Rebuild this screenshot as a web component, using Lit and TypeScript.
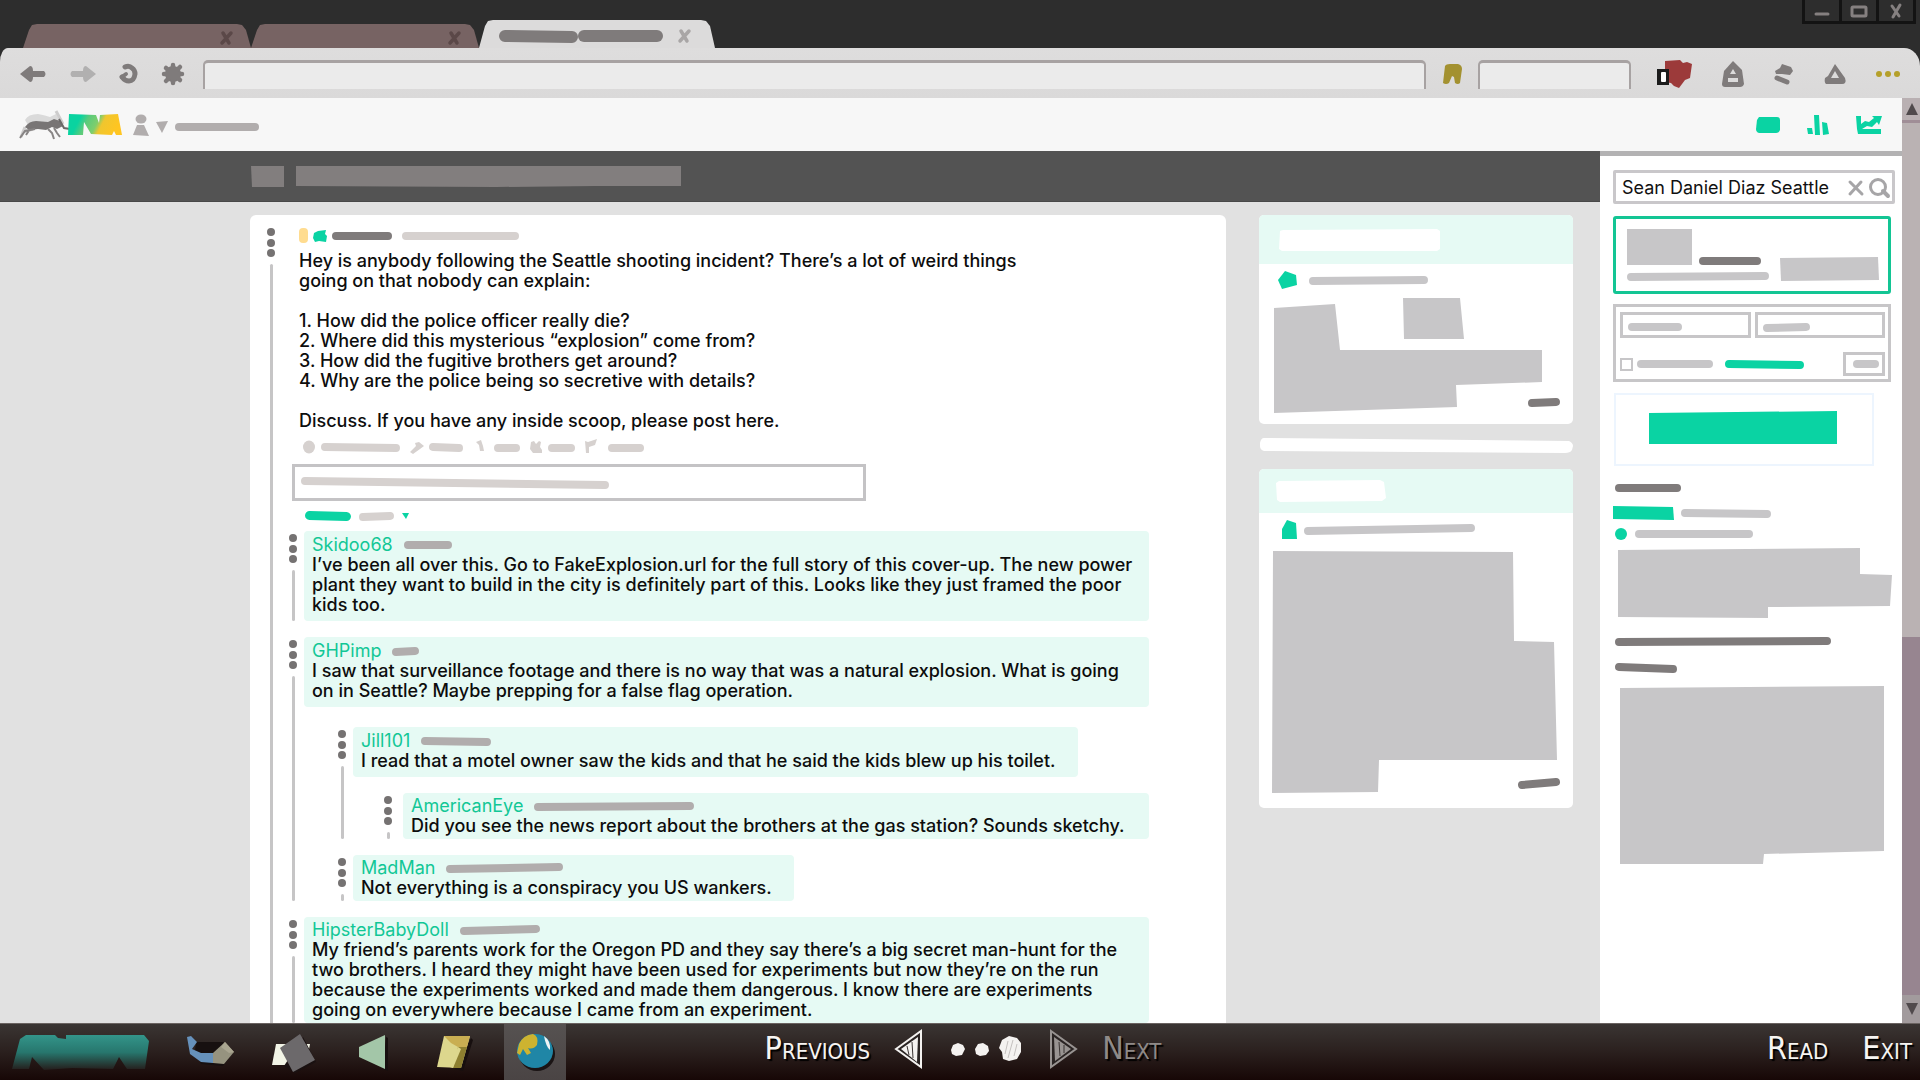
import { LitElement, html, css, svg, nothing, type SVGTemplateResult, type TemplateResult } from "lit";
import { customElement } from "lit/decorators.js";

/* ---------- drawing helpers ---------- */

const INK = "#7f7b7b";
const MUTED = "#b1adad";
const STONE = "#d6d1cf";
const GREY = "#c7c6c8";
const GREEN = "#0ad3a3";

/** Decorative inline drawing of a given size. */
const art = (w: number, h: number, body: SVGTemplateResult) =>
  html`<svg class="art" width=${w} height=${h} viewBox="0 0 ${w} ${h}" aria-hidden="true">${body}</svg>`;

/** Hand-drawn marker stroke standing in for a run of text. */
const stroke = (w: number, color: string, drop = 0, t = 8) => {
  const h = t + Math.abs(drop);
  const r = t / 2;
  const y1 = drop < 0 ? h - r : r;
  const y2 = drop < 0 ? r : h - r;
  return art(
    w,
    h,
    svg`<line x1=${r} y1=${y1} x2=${w - r} y2=${y2} stroke=${color} stroke-width=${t} stroke-linecap="round"/>`,
  );
};

const shape = (w: number, h: number, points: string, color: string) =>
  art(w, h, svg`<polygon points=${points} fill=${color}/>`);

const dots = () =>
  art(
    10,
    30,
    svg`<g fill="#757272"><circle cx="5" cy="4" r="4"/><circle cx="5" cy="15" r="4"/><circle cx="5" cy="25" r="4"/></g>`,
  );

/* ---------- icons ---------- */

const backIcon = art(28, 18, svg`<path d="M1 9 L11 1 Q14 1 14 6 L25 6 Q28 9 25 12 L14 12 Q14 17 11 17 Z" fill=${INK}/>`);
const forwardIcon = art(28, 18, svg`<path d="M27 9 L17 1 Q14 1 14 6 L3 6 Q0 9 3 12 L14 12 Q14 17 17 17 Z" fill="#b1b0b0"/>`);
const reloadIcon = art(
  20,
  22,
  svg`<path d="M6 4 Q10 2 13 5 Q16 7 16 11 Q15 18 10 18 Q6 18 3 14" fill="none" stroke=${INK} stroke-width="5" stroke-linecap="round" stroke-linejoin="round"/><path d="M3 14 L7 11" stroke=${INK} stroke-width="4" stroke-linecap="round"/>`,
);
const burstIcon = art(
  24,
  22,
  svg`<circle cx="12" cy="11" r="8" fill=${INK}/><path d="M12 2V20M3 11H21M5 5L19 17M19 4L5 18" stroke=${INK} stroke-width="4.500" stroke-linecap="round"/>`,
);
const closeIcon = (color: string) =>
  art(14, 14, svg`<path d="M4 2 L10 12 M12 2 L3 12" fill="none" stroke=${color} stroke-width="3.500" stroke-linecap="round"/>`);
const bookmarkIcon = art(
  20,
  22,
  svg`<path d="M3 3 Q4 1 8 1 L16 1 Q20 2 20 6 L18 20 Q16 22 13 20 L12 14 L10 13 L7 20 Q4 22 1 20 Z" fill="#a39130"/>`,
);
const shieldIcon = art(
  35,
  28,
  svg`<path d="M8 1 L23 0 L26 3 L30 2 L35 4 L33 18 L28 20 L22 28 L17 26 L14 23 L8 22 Z" fill="#9c3a3a"/><rect x="0" y="9" width="12" height="16" fill="#1c1c1c"/><rect x="4" y="12" width="5" height="10" rx="1" fill="#fff"/>`,
);
const lanternIcon = art(
  22,
  26,
  svg`<path d="M11 0 L20 9 L22 23 Q21 26 18 26 L3 26 Q0 26 0 23 L2 10 Z" fill=${INK}/><path d="M11 8 L14 13 L8 13 Z" fill="#dcdbdb"/><rect x="6" y="17" width="10" height="4" fill="#dcdbdb"/>`,
);
const lumpIcon = art(
  20,
  22,
  svg`<path d="M1 8 L6 5 L8 1 L17 4 L19 8 L16 12 L8 11 L2 11 Z" fill=${INK}/><path d="M3 15 L13 19" stroke=${INK} stroke-width="5" stroke-linecap="round"/>`,
);
const wedgeIcon = art(
  22,
  20,
  svg`<path d="M11 0 L21 14 Q23 20 18 20 L2 20 Q0 18 1 14 L4 12 Z" fill=${INK}/><path d="M11 7 L15 14 L7 14 Z" fill="#dcdbdb"/>`,
);
const moreIcon = art(24, 6, svg`<g fill="#b5a02a"><circle cx="3" cy="3" r="3"/><circle cx="12" cy="3" r="3"/><circle cx="21" cy="3" r="3"/></g>`);

const logo = art(
  104,
  32,
  svg`<path d="M7 11 Q10 5 20 5 Q26 6 32 8 L38 5 L42 12 L34 16 L10 16 Z" fill="#dadada"/>
    <path d="M38 2 L45 15 M7 18 L3 28 M15 20 L5 23" stroke="#cdcccc" stroke-width="3"/>
    <path d="M7 18 Q11 12 18 12 L30 13 L36 10 L42 12 L45 17 L39 20 L34 18 L28 21 L20 20 L11 21 Z" fill="#787575"/>
    <path d="M12 20 L8 26 M17 20 L7 22 L2 29 M30 20 L34 24 L36 30 M36 19 L39 24 L42 28" fill="none" stroke="#878484" stroke-width="2"/>
    <path d="M41 10 L46 19 L52 20" fill="none" stroke="#6b6868" stroke-width="2"/>
    <defs><linearGradient id="brand" x1="0" x2="1" y1="0" y2="0.200"><stop offset="0.250" stop-color="#0ad3a0"/><stop offset="0.400" stop-color="#5acb7c"/><stop offset="0.600" stop-color="#7fce6c"/><stop offset="0.700" stop-color="#efc62f"/><stop offset="1" stop-color="#ffc521"/></linearGradient></defs>
    <path d="M51 5 L78 6 L81 14 L82 6 L100 5 L104 26 L98 26 L96 22 L94 26 L73 25 L66 13 L65 26 L50 26 Z" fill="url(#brand)"/>`,
);
const personIcon = art(
  16,
  22,
  svg`<ellipse cx="8" cy="5" rx="5.500" ry="4.500" fill=${MUTED}/><path d="M4 11 L11 11 L16 22 L0 21 Z" fill=${MUTED}/>`,
);
const caretIcon = art(12, 12, svg`<path d="M0 1 L12 0 L6 12 Z" fill=${MUTED}/>`);
const mailIcon = art(24, 18, svg`<path d="M3 1 L21 1 Q24 1 24 4 L24 14 Q23 17 20 17 L3 17 Q0 16 0 13 L1 4 Z" fill=${GREEN}/>`);
const barsIcon = art(
  22,
  20,
  svg`<path d="M0 13 L5 13 L6 19 L1 19 Z M7 0 L12 0 L13 20 L8 20 Z M15 7 L20 8 L22 19 L16 20 Z" fill=${GREEN}/>`,
);
const trendIcon = art(
  26,
  20,
  svg`<path d="M0 1 L5 1 L5 9 L9 6 L13 7 L18 3 L16 1 L26 1 L23 10 L21 7 L16 12 L11 11 L6 14 L25 14 L25 19 L2 19 L1 14 Z" fill=${GREEN}/>`,
);
const clearIcon = art(16, 16, svg`<path d="M2 2 L14 14 M13 2 L2 14" stroke="#a6a5a7" stroke-width="3" stroke-linecap="round"/>`);
const searchIcon = art(
  22,
  20,
  svg`<circle cx="10" cy="9" r="7.500" fill="none" stroke="#a6a5a7" stroke-width="3"/><path d="M15 13 L20 18" stroke="#a6a5a7" stroke-width="4" stroke-linecap="round"/>`,
);

/* ---------- thread data ---------- */

interface Comment {
  name: string;
  stamp: [number, number];
  text: string[];
  tight?: boolean;
  wide?: boolean;
  replies?: Comment[];
}

const thread: Comment[] = [
  {
    name: "Skidoo68",
    stamp: [48, 0],
    wide: true,
    text: [
      "I’ve been all over this. Go to FakeExplosion.url for the full story of this cover-up. The new power",
      "plant they want to build in the city is definitely part of this. Looks like they just framed the poor",
      "kids too.",
    ],
  },
  {
    name: "GHPimp",
    stamp: [27, -1],
    wide: true,
    text: [
      "I saw that surveillance footage and there is no way that was a natural explosion. What is going",
      "on in Seattle? Maybe prepping for a false flag operation.",
    ],
    replies: [
      {
        name: "Jill101",
        stamp: [70, 1],
        text: ["I read that a motel owner saw the kids and that he said the kids blew up his toilet."],
        replies: [
          {
            name: "AmericanEye",
            stamp: [160, -1],
            tight: true,
            wide: true,
            text: ["Did you see the news report about the brothers at the gas station? Sounds sketchy."],
          },
        ],
      },
      {
        name: "MadMan",
        stamp: [117, -2],
        tight: true,
        text: ["Not everything is a conspiracy you US wankers."],
      },
    ],
  },
  {
    name: "HipsterBabyDoll",
    stamp: [80, -2],
    wide: true,
    tight: true,
    text: [
      "My friend’s parents work for the Oregon PD and they say there’s a big secret man-hunt for the",
      "two brothers. I heard they might have been used for experiments but now they’re on the run",
      "because the experiments worked and made them dangerous. I know there are experiments",
      "going on everywhere because I came from an experiment.",
    ],
  },
];

const lines = (text: string[]) => text.map((line, i) => html`${i ? html`<br />` : nothing}${line}`);

/* ---------- shared styles ---------- */

const base = css`
  * {
    box-sizing: border-box;
  }
  .art {
    display: block;
    flex: none;
    overflow: visible;
  }
  button {
    display: flex;
    align-items: center;
    justify-content: center;
    flex: none;
    margin: 0;
    padding: 0;
    border: 0;
    background: none;
    color: inherit;
    font: inherit;
    cursor: pointer;
  }
  input {
    margin: 0;
    padding: 0;
    border: 0;
    outline: 0;
    border-radius: 0;
    background: none;
    font: inherit;
    color: inherit;
    min-width: 0;
  }
  a {
    color: inherit;
    text-decoration: none;
  }
`;

/* ---------- browser chrome ---------- */

@customElement("browser-chrome")
export class BrowserChrome extends LitElement {
  static styles = [
    base,
    css`
      :host {
        display: block;
        background: #2d2d2d;
      }
      .titlebar {
        display: flex;
        justify-content: space-between;
        height: 48px;
        padding: 0 4px 0 23px;
      }
      .tabs {
        display: flex;
        align-items: flex-end;
      }
      .tab {
        display: flex;
        align-items: center;
        justify-content: flex-end;
        width: 228px;
        height: 24px;
        padding: 4px 18px 0;
        background: #776363;
        clip-path: polygon(0 100%, 6px 6px, 9px 1px, 14px 0, calc(100% - 14px) 0, calc(100% - 9px) 1px, calc(100% - 5px) 6px, 100% 100%);
      }
      .tab.active {
        width: 236px;
        height: 28px;
        padding: 4px 24px 0 19px;
        gap: 14px;
        background: #dcdbdb;
      }
      .title {
        display: flex;
      }
      .window {
        display: flex;
        align-self: flex-start;
        height: 24px;
        background: #131313;
        padding: 0 3px 3px;
        gap: 3px;
      }
      .window button {
        width: 34px;
        height: 21px;
        background: #2d2d2d;
      }
      .toolbar {
        display: flex;
        align-items: center;
        gap: 16px;
        height: 50px;
        padding: 2px 20px 0 19px;
        background: linear-gradient(#dedddd, #dad9d9);
        border-radius: 8px 16px 0 0 / 14px 18px 0 0;
      }
      .nav {
        display: flex;
        align-items: center;
        gap: 22px;
        padding-right: 2px;
      }
      .field {
        height: 29px;
        border: solid #a7a2a2;
        border-width: 3px 2px 0;
        border-radius: 5px 5px 0 0;
        background: #ebebeb;
        padding: 0 8px;
      }
      .url {
        flex: 1;
      }
      .find {
        width: 153px;
      }
      .tools {
        display: flex;
        align-items: center;
        gap: 30px;
        padding-left: 10px;
      }
    `,
  ];

  render() {
    return html`
      <div class="titlebar">
        <div class="tabs">
          <button class="tab" aria-label="Close tab 1">${closeIcon("#5b4848")}</button>
          <button class="tab" aria-label="Close tab 2">${closeIcon("#5b4848")}</button>
          <button class="tab active" aria-label="Current tab">
            <span class="title">${stroke(79, INK, 1, 12)}${stroke(85, INK, 0, 12)}</span>
            ${closeIcon("#a9a6a6")}
          </button>
        </div>
        <div class="window">
          <button aria-label="Minimize">
            ${art(16, 14, svg`<path d="M2 10 H14" stroke="#858080" stroke-width="3" stroke-linecap="round"/>`)}
          </button>
          <button aria-label="Maximize">
            ${art(18, 14, svg`<rect x="2" y="3" width="14" height="9" rx="1" fill="none" stroke="#858080" stroke-width="3"/>`)}
          </button>
          <button aria-label="Close window">
            ${art(14, 14, svg`<path d="M3 2 L10 12 M11 1 L4 13" stroke="#858080" stroke-width="3" stroke-linecap="round"/>`)}
          </button>
        </div>
      </div>
      <div class="toolbar">
        <div class="nav">
          <button aria-label="Back">${backIcon}</button>
          <button aria-label="Forward">${forwardIcon}</button>
          <button aria-label="Reload">${reloadIcon}</button>
          <button aria-label="Settings">${burstIcon}</button>
        </div>
        <input class="field url" type="text" aria-label="Address" />
        <button aria-label="Bookmark">${bookmarkIcon}</button>
        <input class="field find" type="text" aria-label="Web search" />
        <div class="tools">
          <button aria-label="Shield">${shieldIcon}</button>
          <button aria-label="Home">${lanternIcon}</button>
          <button aria-label="Sync">${lumpIcon}</button>
          <button aria-label="Alerts">${wedgeIcon}</button>
          <button aria-label="More">${moreIcon}</button>
        </div>
      </div>
    `;
  }
}

/* ---------- forum thread ---------- */

@customElement("forum-thread")
export class ForumThread extends LitElement {
  static styles = [
    base,
    css`
      :host {
        display: flex;
        gap: 23px;
        min-width: 0;
        padding: 13px 77px 0 16px;
        border-radius: 6px 6px 0 0;
        background: #fff;
        font-weight: 500;
        font-size: 18px;
        line-height: 20px;
        color: #0d0d0d;
      }
      .rail {
        display: flex;
        flex: none;
        flex-direction: column;
        align-items: center;
        gap: 6px;
        width: 10px;
      }
      .rail::after {
        content: "";
        flex: 1;
        width: 3px;
        border-radius: 2px;
        background: #c6c5c6;
      }
      .content {
        flex: 1;
        min-width: 0;
        margin-left: -10px;
      }
      .post {
        padding-left: 10px;
      }
      .byline {
        display: flex;
        align-items: center;
        height: 16px;
        gap: 5px;
      }
      .byline .art:last-child {
        margin-left: 5px;
      }
      .text {
        margin: 7px 0 0;
      }
      .text p {
        margin: 0 0 20px;
      }
      .text p:last-child {
        margin: 0;
      }
      .actions {
        display: flex;
        align-items: center;
        gap: 10px;
        height: 33px;
        padding-left: 4px;
      }
      .actions a {
        display: flex;
        align-items: center;
        gap: 5px;
      }
      .reply {
        display: grid;
        align-items: center;
        width: 574px;
        max-width: 100%;
        height: 37px;
        margin-left: 3px;
        border: 3px solid #c4c3c5;
      }
      .reply > * {
        grid-area: 1 / 1;
      }
      .reply .art {
        margin-left: 6px;
      }
      .reply input {
        width: 100%;
        height: 100%;
      }
      .sort {
        display: flex;
        align-items: center;
        gap: 8px;
        height: 30px;
        padding-left: 16px;
      }
      .comment {
        display: flex;
        gap: 6px;
        margin-bottom: 16px;
      }
      .thread {
        margin-left: -1px;
      }
      .thread .rail {
        padding-top: 3px;
      }
      .body {
        flex: 1;
        min-width: 0;
        max-width: 845px;
      }
      .bubble {
        width: fit-content;
        min-width: 0;
        max-width: 100%;
        padding: 4px 22px 6px 8px;
        border-radius: 4px;
        background: #e6faf4;
      }
      .wide {
        width: 100%;
        padding-right: 8px;
      }
      .tight {
        padding-bottom: 3px;
        padding-top: 3px;
      }
      .name {
        display: flex;
        align-items: center;
        gap: 11px;
      }
      .name a {
        color: #12c796;
        font-weight: 400;
      }
      .bubble p {
        margin: 0;
      }
      .replies {
        margin: 20px 0 0 33px;
      }
      .replies .replies {
        margin-left: 30px;
        margin-top: 16px;
      }
      .replies .replies .comment {
        gap: 10px;
      }
      .replies .comment:last-child {
        margin-bottom: 0;
      }
    `,
  ];

  private comment(c: Comment): TemplateResult {
    const [w, drop] = c.stamp;
    return html`
      <article class="comment">
        <div class="rail">${dots()}</div>
        <div class="body">
          <div class="bubble ${c.tight ? "tight" : ""} ${c.wide ? "wide" : ""}">
            <div class="name"><a href="#${c.name}">${c.name}</a>${stroke(w, MUTED, drop)}</div>
            <p>${lines(c.text)}</p>
          </div>
          ${c.replies ? html`<div class="replies">${c.replies.map((r) => this.comment(r))}</div>` : nothing}
        </div>
      </article>
    `;
  }

  render() {
    return html`
      <div class="rail">${dots()}</div>
      <div class="content">
        <div class="post">
          <div class="byline">
            ${art(9, 16, svg`<rect x="0" y="0" width="9" height="15" rx="4" fill="#ffdc90"/>`)}
            ${shape(14, 12, "1,3 5,1 13,0 12,4 14,6 13,12 6,11 2,12 0,8", GREEN)} ${stroke(60, INK)}
            ${stroke(117, STONE)}
          </div>
          <div class="text">
            <p>
              Hey is anybody following the Seattle shooting incident? There’s a lot of weird things<br />going on that
              nobody can explain:
            </p>
            <p>
              1. How did the police officer really die?<br />2. Where did this mysterious “explosion” come from?<br />3.
              How did the fugitive brothers get around?<br />4. Why are the police being so secretive with details?
            </p>
            <p>Discuss. If you have any inside scoop, please post here.</p>
          </div>
          <div class="actions">
            <a href="#comments" aria-label="Comments"
              >${art(13, 13, svg`<ellipse cx="6" cy="6" rx="6" ry="6.500" fill=${STONE}/>`)}${stroke(79, STONE, 1)}</a
            >
            <a href="#share" aria-label="Share">${shape(14, 12, "0,10 6,4 5,1 9,0 14,4 10,7 3,12", STONE)}${stroke(34, STONE, 1)}</a>
            <a href="#save" aria-label="Save">${shape(16, 13, "3,1 8,-1 10,5 11,10 7,10 6,4", STONE)}${stroke(26, STONE)}</a>
            <a href="#hide" aria-label="Hide">${shape(13, 12, "1,0 4,-1 6,2 9,-1 11,0 10,5 12,8 12,11 3,11 0,7", STONE)}${stroke(27, STONE)}</a>
            <a href="#report" aria-label="Report"
              >${shape(18, 14, "0,0 3,1 12,-2 10,4 4,6 4,12 1,12", STONE)}${stroke(36, STONE)}</a
            >
          </div>
        </div>
        <div class="reply">
          ${stroke(308, STONE, 4)}
          <input type="text" aria-label="Write a comment" />
        </div>
        <div class="sort">
          ${stroke(46, GREEN, 1, 9)} ${stroke(35, STONE, -1)} ${art(7, 6, svg`<path d="M0 0H7L4 6Z" fill=${GREEN}/>`)}
        </div>
        <div class="thread">${thread.map((c) => this.comment(c))}</div>
      </div>
    `;
  }
}

/* ---------- right-hand cards ---------- */

@customElement("related-cards")
export class RelatedCards extends LitElement {
  static styles = [
    base,
    css`
      :host {
        display: flex;
        flex-direction: column;
        gap: 14px;
      }
      .card {
        overflow: hidden;
        border-radius: 5px;
        background: #fff;
      }
      .head {
        display: flex;
        align-items: center;
        height: 49px;
        padding-left: 20px;
        background: #e6faf4;
      }
      .second .head {
        height: 44px;
        padding-left: 17px;
      }
      .row {
        display: flex;
        align-items: center;
        gap: 12px;
        padding: 7px 19px 6px;
      }
      .second .row {
        gap: 4px;
      }
      .picture {
        padding: 0 13px;
      }
      .more {
        display: flex;
        justify-content: flex-end;
        padding: 0 13px 17px;
      }
      .first .more {
        margin-top: -14px;
      }
      .second .more {
        margin-top: -17px;
        padding-bottom: 19px;
      }
    `,
  ];

  render() {
    return html`
      <section class="card first">
        <div class="head">${shape(161, 22, "1,2 4,1 158,0 161,2 161,20 158,22 3,22 0,20", "#fff")}</div>
        <div class="row">${shape(19, 19, "0,9 7,0 18,4 19,14 4,18", GREEN)}${stroke(119, GREY, -1)}</div>
        <div class="picture">
          ${art(
            270,
            116,
            svg`<path d="M2 12 L63 8 L68 54 L270 54 L270 86 L184 89 L185 111 L2 117 Z M131 2 L188 2 L192 43 L132 43 Z" fill=${GREY}/>`,
          )}
        </div>
        <div class="more"><a href="#more-a" aria-label="More">${stroke(32, INK, -1)}</a></div>
      </section>
      ${art(314, 17, svg`<path d="M5 0 L310 3 Q314 5 314 8 L313 12 Q311 15 306 15 L5 13 Q1 12 1 8 L1 5 Q2 0 5 0Z" fill="#fff"/>`)}
      <section class="card second">
        <div class="head">${shape(110, 22, "0,3 3,1 104,0 108,2 110,18 106,21 4,22 1,20", "#fff")}</div>
        <div class="row">
          ${shape(22, 19, "4,19 4,9 9,0 18,3 19,19", GREEN)}${stroke(171, GREY, -3)}
        </div>
        <div class="picture">
          ${art(
            288,
            250,
            svg`<path d="M1 6 L241 7 L242 96 L282 97 L285 215 L107 215 L106 247 L0 248 Z" fill=${GREY}/>`,
          )}
        </div>
        <div class="more"><a href="#more-b" aria-label="More">${stroke(42, INK, -3)}</a></div>
      </section>
    `;
  }
}

/* ---------- search sidebar ---------- */

@customElement("search-panel")
export class SearchPanel extends LitElement {
  static styles = [
    base,
    css`
      :host {
        display: flex;
        flex-direction: column;
        padding: 14px 7px 0 13px;
        border-top: 5px solid #b3b2b3;
        background: #fff;
        font-size: 18px;
        line-height: 20px;
        color: #111;
      }
      .search {
        display: flex;
        align-items: center;
        gap: 4px;
        height: 34px;
        margin-bottom: 12px;
        padding: 2px 2px 0 6px;
        border: 3px solid #c9c7ca;
        border-radius: 2px;
      }
      .search input {
        flex: 1;
      }
      .result {
        display: flex;
        align-items: flex-end;
        justify-content: space-between;
        height: 78px;
        margin-right: 4px;
        padding: 0 9px 9px 11px;
        border: 3px solid #13c594;
        border-radius: 3px;
      }
      .lead {
        display: grid;
        gap: 7px;
        padding-bottom: 1px;
      }
      .pair {
        display: flex;
        align-items: flex-end;
        gap: 6px;
      }
      .filters {
        display: grid;
        grid-template-columns: 1fr 1fr;
        gap: 14px 4px;
        height: 78px;
        margin: 10px 4px 0 0;
        padding: 5px 3px 0 4px;
        border: 3px solid #c7c6c8;
        align-content: start;
      }
      .filters button {
        justify-content: flex-start;
        height: 26px;
        padding: 4px 5px 0;
        border: 3px solid #c7c6c8;
      }
      .options {
        display: flex;
        grid-column: 1 / -1;
        align-items: center;
        height: 24px;
      }
      .options input {
        appearance: none;
        width: 13px;
        height: 13px;
        border: 2px solid #c7c6c8;
      }
      .options label {
        margin: 0 12px 0 4px;
      }
      .options button {
        height: 24px;
        margin-left: auto;
        padding: 0 3px 0 7px;
      }
      .promo {
        display: flex;
        align-items: center;
        justify-content: center;
        width: 260px;
        height: 73px;
        margin: 11px 0 18px 1px;
        padding: 0 2px 5px 0;
        border: 2px solid #edf5fe;
      }
      .row {
        display: flex;
        align-items: center;
        height: 22px;
        gap: 8px;
      }
      .tag {
        height: 31px;
        gap: 6px;
        padding-top: 11px;
      }
      .heading {
        padding: 0 2px;
      }
      .heading + .heading {
        padding-top: 17px;
      }
      .shot {
        padding: 2px 0 0 5px;
      }
    `,
  ];

  render() {
    return html`
      <form class="search" role="search">
        <input type="text" aria-label="Search" value="Sean Daniel Diaz Seattle" />
        <button type="reset" aria-label="Clear">${clearIcon}</button>
        <button type="button" aria-label="Search">${searchIcon}</button>
      </form>
      <a class="result" href="#result" aria-label="Top result">
        <span class="lead">
          <span class="pair">${shape(66, 36, "0,0 65,0 65,36 0,36", GREY)}${stroke(62, INK)}</span>
          ${stroke(142, GREY, -1)}
        </span>
        ${shape(100, 28, "1,4 99,3 100,26 2,27", GREY)}
      </a>
      <div class="filters">
        <button aria-label="Filter one">${stroke(54, GREY)}</button>
        <button aria-label="Filter two">${stroke(47, GREY, -1)}</button>
        <div class="options">
          <input id="only" type="checkbox" /><label for="only" aria-label="Only this">${stroke(76, GREY)}</label>
          <a href="#advanced" aria-label="Advanced">${stroke(79, GREEN, 1)}</a>
          <button aria-label="Apply">${stroke(26, GREY)}</button>
        </div>
      </div>
      <div class="promo">
        <button aria-label="Promotion">${shape(188, 33, "0,2 188,0 188,33 0,33", GREEN)}</button>
      </div>
      <div class="heading">${stroke(66, INK)}</div>
      <div class="row tag">${shape(62, 14, "0,0 60,1 61,14 0,13", GREEN)}${stroke(90, GREY, 1)}</div>
      <div class="row">
        ${art(14, 12, svg`<circle cx="8" cy="6" r="6" fill=${GREEN}/>`)}${stroke(118, GREY)}
      </div>
      <div class="shot">
        ${art(276, 90, svg`<path d="M0 3 L242 1 L242 27 L274 28 L272 59 L150 60 L150 71 L0 70 Z" fill=${GREY}/>`)}
      </div>
      <div class="heading">${stroke(216, INK, -1)}</div>
      <div class="heading">${stroke(62, INK, 2)}</div>
      <div class="shot">
        ${art(270, 200, svg`<path d="M2 13 L266 11 L266 176 L146 179 L145 189 L2 189 Z" fill=${GREY}/>`)}
      </div>
    `;
  }
}

/* ---------- bottom bar ---------- */

@customElement("task-bar")
export class TaskBar extends LitElement {
  static styles = [
    base,
    css`
      :host {
        display: grid;
        grid-template-columns: 1fr auto 1fr;
        align-items: center;
        height: 57px;
        border-top: 1px solid #6a6361;
        background: linear-gradient(#3a3533, #2c2220 45%, #170706);
        color: #f7f5f3;
        font: 32px / 36px "DejaVu Sans Condensed", "DejaVu Sans", sans-serif;
        font-variant-caps: small-caps;
      }
      .apps {
        display: flex;
        align-items: center;
        padding-left: 12px;
        height: 56px;
      }
      .apps button {
        width: 62px;
        height: 56px;
        margin-left: 19px;
      }
      .apps .start {
        width: 138px;
        margin: 0 11px 0 0;
      }
      .apps .current {
        background: linear-gradient(#565251, #4a4444);
      }
      .pager {
        display: flex;
        align-items: center;
        gap: 24px;
        padding-left: 6px;
      }
      .label {
        padding-bottom: 8px;
        text-shadow: 2px 2px 1px #000;
      }
      .marks {
        display: flex;
        align-items: center;
      }
      .pager .art {
        margin-bottom: 6px;
      }
      .next {
        color: #8f8a88;
      }
      .exit {
        display: flex;
        justify-content: flex-end;
        gap: 34px;
        padding-right: 8px;
      }
    `,
  ];

  render() {
    return html`
      <nav class="apps">
        <button class="start" aria-label="Start">
          ${art(
            138,
            38,
            svg`<defs><linearGradient id="teal" x1="0" y1="0" x2="0" y2="1"><stop offset="0" stop-color="#33958a"/><stop offset="0.500" stop-color="#27766d"/><stop offset="1" stop-color="#251d1b"/></linearGradient></defs>
            <path d="M8 6 L14 2 L43 2 L46 5 L54 6 L54 2 L132 2 L137 8 L133 36 L115 36 L107 24 L101 36 L60 35 L32 37 L20 24 L17 36 L0 36 Z" fill="url(#teal)"/>`,
          )}
        </button>
        <button aria-label="Boat">
          ${art(
            48,
            34,
            svg`<path d="M9 7 L36 7 L46 18 L36 31 L14 29 L8 16 Z" fill="#171010"/>
            <path d="M0 2 L4 1 L10 7 L5 14 L14 18 L26 18 L26 28 L14 27 L3 19 Z" fill="#6691bb"/>
            <path d="M26 18 L38 7 L47 17 L37 29 L26 28 Z" fill="#96937f"/><path d="M38 7 L47 17 L42 18 L34 12Z" fill="#aaa691"/>`,
          )}
        </button>
        <button aria-label="Papers">
          ${art(
            40,
            38,
            svg`<path d="M4 11 L38 11 L34 32 L0 32 Z" fill="#f2f4e6"/><path d="M31 4 L44 29 L23 40 L12 33Z" fill="#1a1111"/><path d="M28 1 L43 27 L21 39 L8 15 Z" fill="#6c696b"/>`,
          )}
        </button>
        <button aria-label="Sound">
          ${art(28, 34, svg`<path d="M27 2 L29 3 L29 36 L24 34 Z" fill="#170f0f"/><path d="M0 12 L26 0 L26 34 L0 22 Z" fill="#a3c6a8"/>`)}
        </button>
        <button aria-label="Notes">
          ${art(
            34,
            34,
            svg`<path d="M34 3 L36 5 L26 36 L18 34Z" fill="#170f0f"/><path d="M7 1 L33 1 L24 33 L0 32 Z" fill="#ddd78d"/><path d="M7 1 L33 1 L30 12 L21 12 L14 8 Z" fill="#c9ae52"/><path d="M21 12 L30 12 L24 33 L16 33 Z" fill="#8d7f30"/><path d="M21 12 L24 14 L16 33 L13 32Z" fill="#ddd78d"/>`,
          )}
        </button>
        <button class="current" aria-label="Browser">
          ${art(
            40,
            38,
            svg`<ellipse cx="22" cy="21" rx="18" ry="17" fill="#1a1414"/><ellipse cx="20" cy="18" rx="18" ry="17" fill="#1f86a6"/>
            <path d="M4 11 Q8 2 18 1 Q24 3 22 12 Q18 17 13 15 L16 20 L12 22 L8 16 L5 22 L2 20 Z" fill="#cdb330"/><path d="M29 3 Q36 8 35 17 Q31 14 29 3Z" fill="#eef3f5"/>`,
          )}
        </button>
      </nav>
      <div class="pager">
        <button class="label">Previous</button>
        <button aria-label="Previous page">
          ${art(
            28,
            38,
            svg`<path d="M2 19 L27 1 L27 37 Z" fill="#2a2423" stroke="#f4f2f0" stroke-width="2"/><path d="M7 19 L24 7 L23 32 Z" fill="#f4f2f0"/><path d="M13 16 L15 25 M18 12 L19 28" stroke="#3a3433" stroke-width="1"/>`,
          )}
        </button>
        <span class="marks">
          ${art(
            80,
            30,
            svg`<g fill="#f4f2f0"><path d="M5 16 L7 11 L12 9 L17 11 L19 15 L16 21 L10 22 L6 20 Z"/><path d="M29 15 L32 10 L37 9 L42 12 L43 17 L40 21 L34 22 L30 20 Z"/><path d="M53 14 L56 6 L63 2 L71 4 L75 9 L75 18 L71 25 L63 27 L57 25 L56 18 Z"/></g><path d="M62 7 L59 20 M67 6 L62 24 M71 10 L68 22" stroke="#c5c1bf" stroke-width="1"/>`,
          )}
        </span>
        <button aria-label="Next page">
          ${art(
            28,
            38,
            svg`<path d="M1 1 L26 19 L1 37 Z" fill="#2a2423" stroke="#989391" stroke-width="2"/><path d="M4 7 L21 19 L5 31 Z" fill="#989391"/><path d="M9 12 L10 26 M14 15 L14 23" stroke="#3a3433" stroke-width="1"/>`,
          )}
        </button>
        <button class="label next">Next</button>
      </div>
      <div class="exit">
        <button class="label">Read</button>
        <button class="label">Exit</button>
      </div>
    `;
  }
}

/* ---------- page ---------- */

@customElement("app-root")
export class AppRoot extends LitElement {
  static styles = [
    base,
    css`
      :host {
        display: flex;
        flex-direction: column;
        height: 100vh;
        overflow: hidden;
        background: #e1e1e1;
        font-family: Inter, "Liberation Sans", sans-serif;
      }
      .viewport {
        display: flex;
        flex: 1;
        min-height: 0;
      }
      .page {
        display: flex;
        flex: 1;
        flex-direction: column;
        min-width: 0;
        overflow: hidden;
      }
      .site {
        display: flex;
        flex: none;
        align-items: center;
        height: 53px;
        padding: 0 20px 0 18px;
        background: #f7f7f7;
      }
      .brand {
        display: flex;
        align-items: center;
        flex: 1;
      }
      .account {
        display: flex;
        align-items: center;
        gap: 7px;
        padding-left: 11px;
      }
      .account .art:not(:first-child) {
        margin-top: 5px;
      }
      .links {
        display: flex;
        align-items: center;
        gap: 27px;
      }
      .columns {
        display: flex;
        flex: 1;
        min-height: 0;
      }
      .main {
        display: flex;
        flex: 1;
        flex-direction: column;
        min-width: 0;
      }
      .banner {
        display: flex;
        flex: none;
        align-items: center;
        gap: 12px;
        height: 51px;
        padding: 0 27px 0 251px;
        background: #535353;
        border-bottom: 1px solid #484848;
      }
      .layout {
        display: grid;
        flex: 1;
        grid-template-columns: minmax(0, 1fr) 314px;
        gap: 33px;
        min-height: 0;
        padding: 13px 27px 0 250px;
      }
      .side {
        flex: none;
        width: 302px;
      }
      .scroll {
        display: flex;
        flex-direction: column;
        flex: none;
        width: 18px;
        background: #978590;
      }
      .scroll button {
        height: 22px;
        padding-left: 2px;
        background: #b9b0b2;
      }
      .scroll .down {
        height: 28px;
        background: #a29b9d;
      }
      .thumb {
        height: 517px;
        border-top: 3px solid #a08e97;
        background: #bab2b3;
      }
      .track {
        flex: 1;
      }
    `,
  ];

  render() {
    return html`
      <browser-chrome></browser-chrome>
      <div class="viewport">
        <div class="page">
          <header class="site">
            <div class="brand">
              <a href="#home" aria-label="Home">${logo}</a>
              <button class="account" aria-label="Account">${personIcon}${caretIcon}${stroke(84, MUTED, 0, 8)}</button>
            </div>
            <nav class="links">
              <a href="#mail" aria-label="Mail">${mailIcon}</a>
              <a href="#stats" aria-label="Stats">${barsIcon}</a>
              <a href="#trends" aria-label="Trends">${trendIcon}</a>
            </nav>
          </header>
          <div class="columns">
            <main class="main">
              <div class="banner">
                ${shape(33, 21, "0,0 33,0 33,21 1,21", "#827e7e")}${shape(385, 21, "0,0 385,0 385,20 300,20 200,21 0,20", "#827e7e")}
              </div>
              <div class="layout">
                <forum-thread></forum-thread>
                <related-cards></related-cards>
              </div>
            </main>
            <search-panel class="side"></search-panel>
          </div>
        </div>
        <div class="scroll">
          <button aria-label="Scroll up">${art(12, 12, svg`<path d="M6 0 L12 12 L0 12 Z" fill="#504a4c"/>`)}</button>
          <div class="thumb"></div>
          <div class="track"></div>
          <button class="down" aria-label="Scroll down">${art(12, 12, svg`<path d="M0 0 L12 0 L6 12 Z" fill="#504a4c"/>`)}</button>
        </div>
      </div>
      <task-bar></task-bar>
    `;
  }
}
